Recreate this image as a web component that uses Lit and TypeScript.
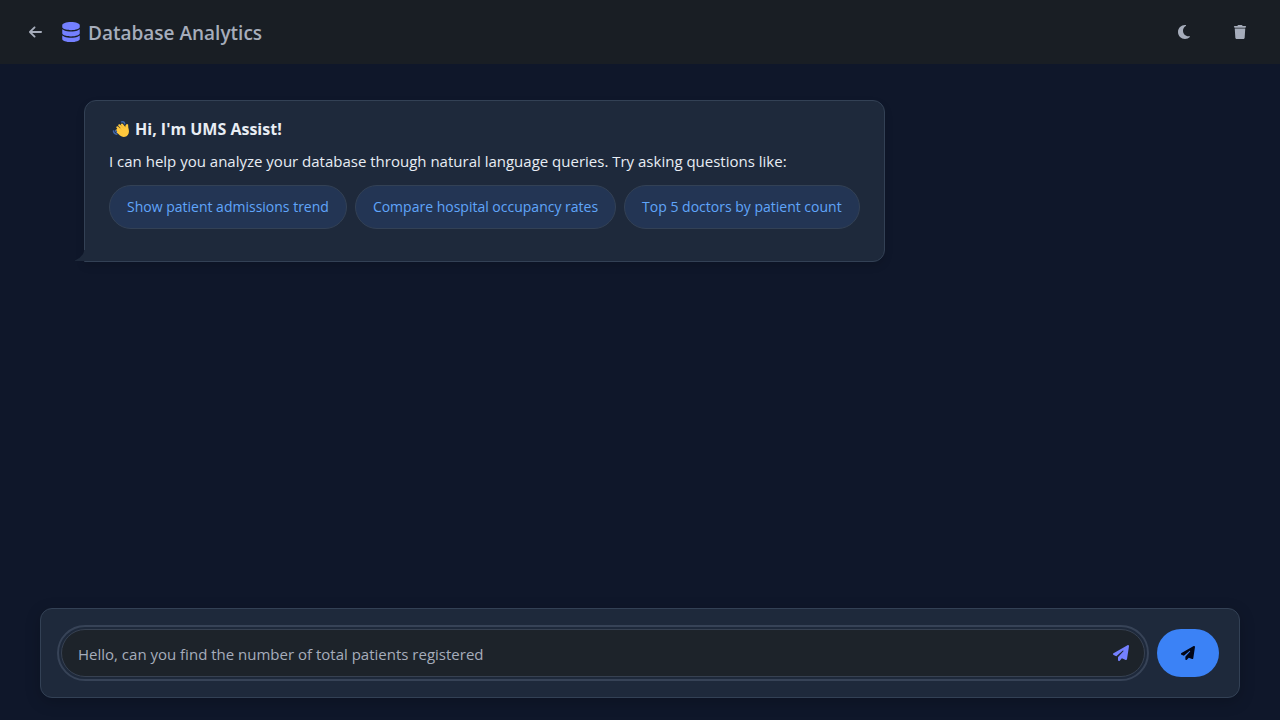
import { LitElement, html, css, svg } from "lit";
import { customElement, state } from "lit/decorators.js";

const glyph = (viewBox: string, name: string, d: string) => html`
  <svg class="glyph ${name}" viewBox=${viewBox} aria-hidden="true">${svg`<path d=${d}></path>`}</svg>
`;

const arrowLeft = glyph(
  "0 0 448 512",
  "arrow",
  "M9.4 233.4c-12.5 12.500-12.500 32.800 0 45.300l160 160c12.500 12.500 32.800 12.500 45.300 0s12.500-32.800 0-45.300L109.200 288 416 288c17.700 0 32-14.300 32-32s-14.300-32-32-32l-306.700 0L214.600 118.600c12.500-12.500 12.500-32.800 0-45.300s-32.800-12.500-45.300 0l-160 160z"
);
const database = glyph(
  "0 0 448 512",
  "database",
  "M448 80v48c0 44.200-100.300 80-224 80S0 172.200 0 128V80C0 35.800 100.300 0 224 0S448 35.800 448 80zM393.200 214.700c20.800-7.400 39.900-16.900 54.800-28.600V288c0 44.200-100.300 80-224 80S0 332.200 0 288V186.100c14.900 11.800 34 21.200 54.800 28.600C99.700 230.700 159.500 240 224 240s124.300-9.300 169.200-25.300zM0 346.100c14.900 11.800 34 21.200 54.800 28.600C99.700 390.700 159.500 400 224 400s124.300-9.300 169.200-25.300c20.800-7.400 39.900-16.900 54.800-28.600V432c0 44.200-100.300 80-224 80S0 476.200 0 432V346.100z"
);
const moon = glyph(
  "0 32 384 448",
  "moon",
  "M223.500 32C100 32 0 132.300 0 256S100 480 223.500 480c60.600 0 115.500-24.200 155.800-63.400c5-4.900 6.300-12.500 3.100-18.700s-10.100-9.700-17-8.500c-9.800 1.700-19.800 2.600-30.100 2.600c-96.900 0-175.500-78.800-175.500-176c0-65.800 36-123.100 89.300-153.300c6.100-3.500 9.200-10.500 7.700-17.300s-7.300-11.900-14.300-12.500c-6.300-.5-12.600-.8-19-.8z"
);
const trash = glyph(
  "0 0 448 512",
  "trash",
  "M135.200 17.700L128 32H32C14.300 32 0 46.300 0 64S14.300 96 32 96H416c17.700 0 32-14.300 32-32s-14.300-32-32-32H320l-7.200-14.300C307.400 6.800 296.300 0 284.200 0H163.800c-12.100 0-23.200 6.800-28.600 17.700zM416 128H32L53.200 467c1.600 25.300 22.600 45 47.900 45H346.900c25.300 0 46.300-19.700 47.900-45L416 128z"
);
const planePath =
  "M498.100 5.600c10.100 7 15.400 19.100 13.500 31.200l-64 416c-1.500 9.700-7.400 18.200-16 23s-18.900 5.400-28 1.600L284 427.700l-68.500 74.100c-8.900 9.700-22.900 12.900-35.200 8.100S160 493.200 160 480V396.400c0-4 1.500-7.800 4.200-10.700L331.800 202.800c5.800-6.300 5.600-16-.4-22s-15.700-6.400-22-.7L106 360.800 17.700 316.600C7.100 311.300 .3 300.700 0 288.900s5.900-22.800 16.100-28.700l448-256c10.700-6.100 23.900-5.500 34 1.400z";

const wave = html`
  <svg class="wave" viewBox="0 0 18 18" aria-hidden="true">
    <g fill="none" stroke="#3f65a8" stroke-width="1.500" stroke-linecap="round">
      <path d="M9.500 1.900Q12 1.200 12.700 3.700"></path>
      <path d="M1.500 11Q1.800 14 4.800 14.200"></path>
      <path d="M3.500 10.600Q3.800 12 5 12.400"></path>
    </g>
    <g stroke="#ffc83d" stroke-linecap="round" stroke-width="2.200">
      <path d="M5.400 7.300L9.500 11.500M7.300 5.300L11.500 9.500M10 4.600L13 8.500M5.300 10L9 13.500"></path>
    </g>
    <path
      fill="#ffc83d"
      d="M6 9.500L11.500 6.500L13.200 7.800Q13.100 4.400 15 3.900Q16.600 3.900 16.200 5.800Q16.100 7.500 16.800 9.700Q17.600 13.800 14.500 16.300Q11 18 8 15.600L4.700 12.500Z"
    ></path>
    <path fill="none" stroke="#e9a32a" stroke-width=".4" d="M7.200 7.500L9.800 10.200M9.400 5.900L11.800 8.500"></path>
  </svg>
`;

@customElement("app-root")
export class AppRoot extends LitElement {
  static styles = css`
    :host {
      display: flex;
      flex-direction: column;
      min-height: 100vh;
      box-sizing: border-box;
      background: #0f172a;
      color: #e8edf4;
      font-family: "Open Sans", "Noto Sans", sans-serif;
      font-size: 15px;
      line-height: 24px;
    }
    * {
      box-sizing: border-box;
    }
    button,
    input {
      font: inherit;
      margin: 0;
    }
    button {
      border: 0;
      background: none;
      color: inherit;
      cursor: pointer;
    }
    .glyph {
      display: block;
      fill: currentColor;
    }
    .header {
      display: flex;
      align-items: center;
      justify-content: space-between;
      height: 64px;
      padding: 0 16px;
      background: #191e24;
      color: #a6adbb;
    }
    .brand,
    .actions {
      display: flex;
      align-items: center;
      gap: 8px;
    }
    .tool {
      display: flex;
      align-items: center;
      justify-content: center;
      width: 48px;
      height: 48px;
      padding: 0;
      border-radius: 8px;
    }
    .tool.back {
      width: 38px;
    }
    .arrow {
      width: 13px;
      height: 16px;
    }
    .moon {
      width: 14px;
      height: 14px;
    }
    .trash {
      width: 14px;
      height: 14px;
    }
    .title {
      display: flex;
      align-items: center;
      gap: 8px;
      margin: 0;
      font-size: 19px;
      font-weight: 600;
      line-height: 28px;
    }
    .title span {
      padding-top: 2px;
    }
    .database {
      width: 18px;
      height: 20px;
      color: #7480ff;
    }
    .messages {
      flex: 1;
      padding: 36px 84px;
    }
    .bubble {
      position: relative;
      width: fit-content;
      max-width: 100%;
      padding: 16px 24px 32px;
      border: 1px solid #334155;
      border-radius: 12px 12px 12px 0;
      background: #1e293b;
      box-shadow: 0 4px 8px rgba(0, 0, 0, 0.12);
    }
    .tail {
      position: absolute;
      left: -10px;
      bottom: 0;
      width: 10px;
      height: 11px;
      fill: #1e293b;
    }
    .greeting {
      display: flex;
      align-items: center;
      gap: 5px;
      margin: 0 0 8px;
      padding-left: 3px;
      font-size: 16px;
      font-weight: 700;
    }
    .wave {
      width: 18px;
      height: 18px;
    }
    .intro {
      margin: 0 0 12px;
    }
    .chips {
      display: flex;
      flex-wrap: wrap;
      gap: 8px;
    }
    .chip {
      min-height: 44px;
      padding: 0 17px;
      border: 1px solid #334155;
      border-radius: 22px;
      background: #233554;
      color: #60a5fa;
      font-size: 14px;
    }
    .composer {
      display: flex;
      align-items: center;
      gap: 12px;
      margin: 0 40px 22px;
      padding: 20px;
      border: 1px solid #334155;
      border-radius: 12px;
      background: #1e293b;
      box-shadow: 0 4px 16px rgba(0, 0, 0, 0.2);
    }
    .field {
      display: flex;
      flex: 1;
      align-items: center;
      height: 48px;
      padding: 0 15px 0 16px;
      border: 1px solid #374151;
      border-radius: 24px;
      outline: 2px solid #374357;
      outline-offset: 2px;
      background: #1d232a;
    }
    .query {
      flex: 1;
      min-width: 0;
      height: 26px;
      padding: 2px 0 0;
      border: 0;
      outline: 0;
      background: transparent;
      color: #a6adbb;
    }
    .plane {
      width: 16px;
      height: 16px;
    }
    .field .plane {
      color: #7480ff;
    }
    .send {
      display: flex;
      align-items: center;
      justify-content: center;
      width: 62px;
      height: 48px;
      padding: 0;
      border-radius: 24px;
      background: #3b82f6;
      color: #020617;
    }
    .send .plane {
      width: 14px;
      height: 14px;
    }
  `;

  @state() private query = "Hello, can you find the number of total patients registered";

  private suggestions = [
    "Show patient admissions trend",
    "Compare hospital occupancy rates",
    "Top 5 doctors by patient count",
  ];

  render() {
    return html`
      <header class="header">
        <div class="brand">
          <button class="tool back" aria-label="Back">${arrowLeft}</button>
          <h1 class="title">${database}<span>Database Analytics</span></h1>
        </div>
        <div class="actions">
          <button class="tool" aria-label="Toggle theme">${moon}</button>
          <button class="tool" aria-label="Clear chat">${trash}</button>
        </div>
      </header>
      <main class="messages">
        <section class="bubble">
          <svg class="tail" viewBox="0 0 10 11" aria-hidden="true"><path d="M10 0V11H0V10.500Q5 8.500 8 4Q9 2 9 0Z"></path></svg>
          <h2 class="greeting">${wave}<span>Hi, I'm UMS Assist!</span></h2>
          <p class="intro">
            I can help you analyze your database through natural language queries. Try asking questions like:
          </p>
          <div class="chips">
            ${this.suggestions.map(
              (text) => html`<button class="chip" @click=${() => (this.query = text)}>${text}</button>`
            )}
          </div>
        </section>
      </main>
      <form class="composer" @submit=${(e: Event) => e.preventDefault()}>
        <label class="field">
          <input
            class="query"
            type="text"
            aria-label="Ask a question"
            .value=${this.query}
            @input=${(e: Event) => (this.query = (e.target as HTMLInputElement).value)}
          />
          ${glyph("0 0 512 512", "plane", planePath)}
        </label>
        <button class="send" type="submit" aria-label="Send">${glyph("0 0 512 512", "plane", planePath)}</button>
      </form>
    `;
  }
}
